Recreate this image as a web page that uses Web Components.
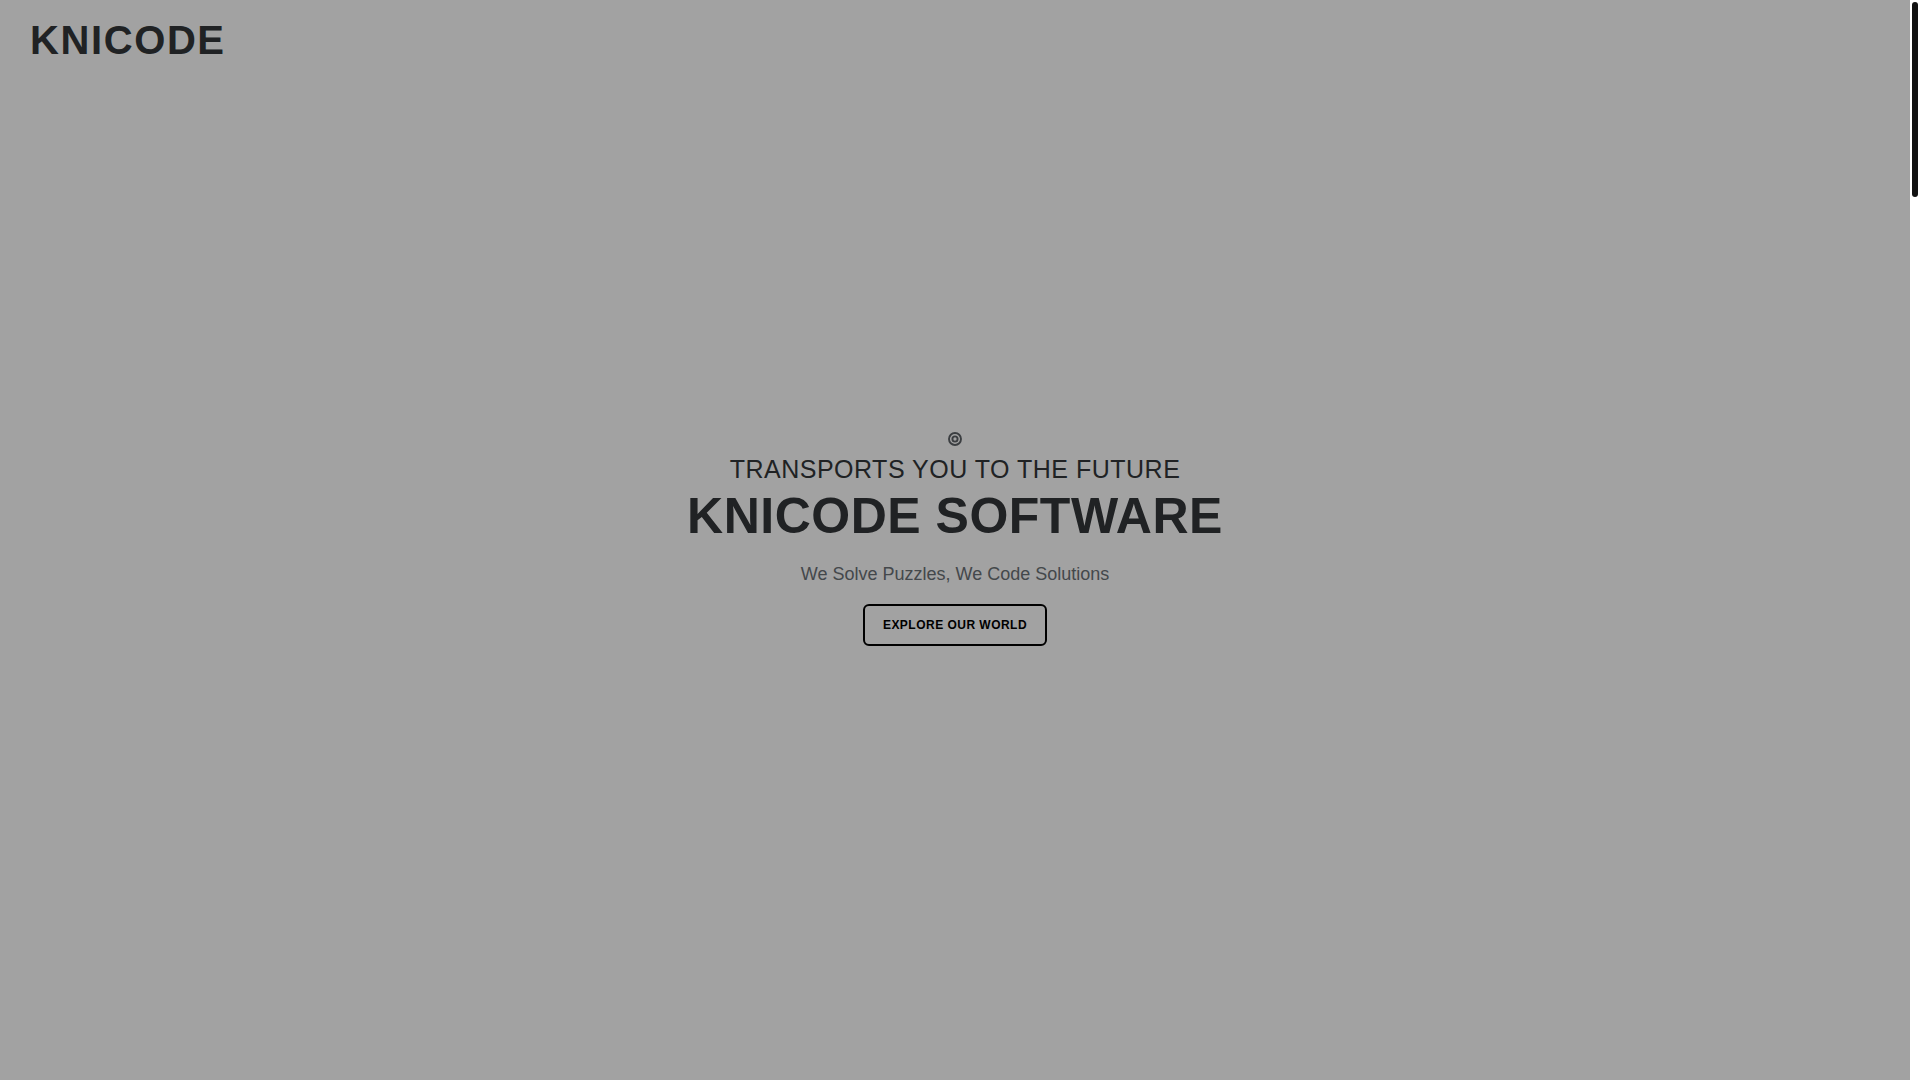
<!DOCTYPE html>
<html lang="en">
<head>
<meta charset="utf-8">
<title>Knicode Software</title>
<style>
body { margin: 0; font-family: "Liberation Sans", Arial, sans-serif; color: #202224; background: #a2a2a2; }
</style>
</head>
<body>
<knicode-page>
  <site-brand slot="brand">KNICODE</site-brand>
  <hero-banner>
    <span slot="tagline">TRANSPORTS YOU TO THE FUTURE</span>
    <span slot="title">KNICODE SOFTWARE</span>
    <span slot="text">We Solve Puzzles, We Code Solutions</span>
    <span slot="action">EXPLORE OUR WORLD</span>
  </hero-banner>
</knicode-page>
<script>
const define = (name, html) => customElements.define(name, class extends HTMLElement {
  constructor() {
    super();
    this.attachShadow({ mode: 'open' }).innerHTML = html;
  }
});

define('target-icon', `
  <style>
    :host { display: block; width: 14px; height: 14px; color: #3b3e41; }
    svg { display: block; width: 100%; height: 100%; }
  </style>
  <svg viewBox="0 0 14 14" fill="none" stroke="currentColor" aria-hidden="true">
    <circle cx="7" cy="7" r="6" stroke-width="1.9"/>
    <circle cx="7" cy="7" r="2.6" stroke-width="1.9"/>
  </svg>`);

define('scroll-rail', `
  <style>
    :host { display: block; flex: none; box-sizing: border-box; width: 10px; padding: 2px; background: #fff; }
    div { height: 18.1%; min-height: 24px; border-radius: 3px; background: #111; }
  </style>
  <div></div>`);

define('site-brand', `
  <style>
    :host { display: block; }
    a { color: inherit; text-decoration: none; font-size: 40px; line-height: 48px; font-weight: 700; letter-spacing: 0.04em; }
  </style>
  <a href="#"><slot></slot></a>`);

define('outline-button', `
  <style>
    :host { display: block; }
    button { display: block; box-sizing: border-box; margin: 0; height: 42px; padding: 0 18px; border: 2px solid #000; border-radius: 6px; background: transparent; color: #000; font: 700 12px/16px "Liberation Sans", Arial, sans-serif; letter-spacing: 0.04em; cursor: pointer; }
  </style>
  <button type="button"><slot></slot></button>`);

define('hero-banner', `
  <style>
    :host { display: flex; flex-direction: column; align-items: center; text-align: center; }
    p, h1 { margin: 0; }
    .tagline { margin-top: 8px; font-size: 25px; line-height: 30px; letter-spacing: 0.02em; }
    h1 { font-size: 50px; line-height: 64px; letter-spacing: 0.01em; }
    .text { margin: 14px 0 18px; font-size: 18px; line-height: 24px; color: #44484b; }
  </style>
  <target-icon></target-icon>
  <p class="tagline"><slot name="tagline"></slot></p>
  <h1><slot name="title"></slot></h1>
  <p class="text"><slot name="text"></slot></p>
  <outline-button><slot name="action"></slot></outline-button>`);

define('knicode-page', `
  <style>
    :host { display: flex; height: 100vh; }
    .view { flex: 1; min-width: 0; display: grid; grid-template-rows: 80px 1fr 80px; background: #a2a2a2; }
    header { padding: 16px 30px; }
    main { display: flex; flex-direction: column; justify-content: center; padding-bottom: 2px; }
  </style>
  <div class="view">
    <header><slot name="brand"></slot></header>
    <main><slot></slot></main>
  </div>
  <scroll-rail></scroll-rail>`);
</script>
</body>
</html>
